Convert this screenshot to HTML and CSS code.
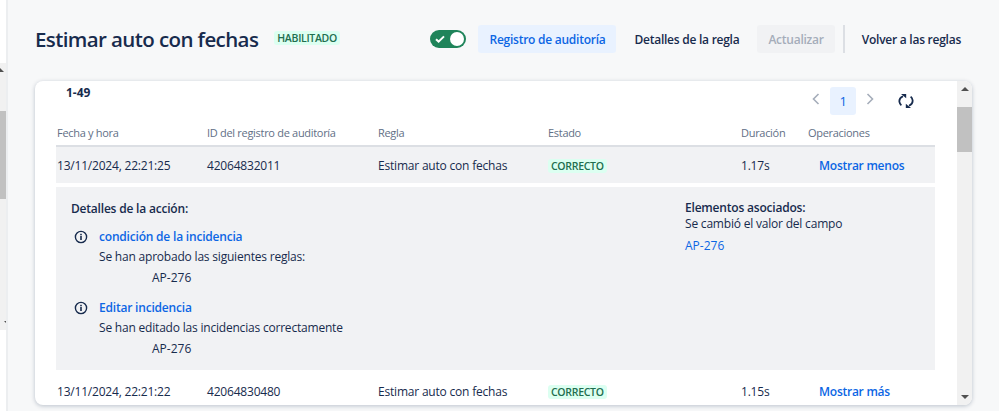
FILE: index.html
```html
<!DOCTYPE html>
<html lang="es">
<head>
    <meta charset="UTF-8">
    <meta name="viewport" content="width=device-width, initial-scale=1.0">
    <title>Estimar auto con fechas</title>
    <link rel="stylesheet" href="styles.css">
</head>
<body>
    <div class="side">
        <div class="side-track">
            <span class="arrow-up side-arrow"></span>
            <div class="side-thumb"></div>
            <span class="arrow-down side-arrow"></span>
        </div>
    </div>
    <main class="main">
        <header class="top">
            <div class="title-wrap">
                <h1>Estimar auto con fechas</h1>
                <span class="lozenge lozenge-top">HABILITADO</span>
            </div>
            <div class="actions">
                <span class="toggle">
                    <svg width="12" height="10" viewBox="0 0 12 10"><path d="M2 5.2l2.6 2.4L10 2.4" fill="none" stroke="#fff" stroke-width="2"/></svg>
                    <span class="knob"></span>
                </span>
                <button type="button" class="btn btn-selected">Registro de auditoría</button>
                <button type="button" class="btn btn-details">Detalles de la regla</button>
                <button type="button" class="btn btn-disabled">Actualizar</button>
                <span class="divider"></span>
                <button type="button" class="btn btn-back">Volver a las reglas</button>
            </div>
        </header>
        <section class="card">
            <div class="card-body">
                <div class="pager-row">
                    <strong class="count">1-49</strong>
                    <div class="pager">
                        <svg class="chev" width="10" height="14" viewBox="0 0 10 14"><path d="M7.5 2L2.5 7l5 5" fill="none" stroke="#a5adba" stroke-width="1.6"/></svg>
                        <span class="page">1</span>
                        <svg class="chev" width="10" height="14" viewBox="0 0 10 14"><path d="M2.5 2l5 5-5 5" fill="none" stroke="#a5adba" stroke-width="1.6"/></svg>
                        <svg class="refresh" width="16" height="16" viewBox="0 0 18 18">
                            <path d="M5.6 3.6C2.6 5 1.2 7.4 1.6 10c.2 1.4.9 2.8 2.2 3.9" fill="none" stroke="#172b4d" stroke-width="2"/>
                            <path d="M3.4 1h5.8v5z" fill="#172b4d"/>
                            <path d="M12.4 14.4c3-1.4 4.4-3.8 4-6.4-.2-1.4-.9-2.8-2.2-3.9" fill="none" stroke="#172b4d" stroke-width="2"/>
                            <path d="M14.6 17H8.8v-5z" fill="#172b4d"/>
                        </svg>
                    </div>
                </div>
                <div class="row row-head">
                    <span>Fecha y hora</span>
                    <span>ID del registro de auditoría</span>
                    <span>Regla</span>
                    <span>Estado</span>
                    <span>Duración</span>
                    <span>Operaciones</span>
                </div>
                <div class="row row-open">
                    <span>13/11/2024, 22:21:25</span>
                    <span>42064832011</span>
                    <span>Estimar auto con fechas</span>
                    <span><span class="lozenge">CORRECTO</span></span>
                    <span>1.17s</span>
                    <a class="more" href="#">Mostrar menos</a>
                </div>
                <div class="detail">
                    <div class="detail-left">
                        <h4>Detalles de la acción:</h4>
                        <div class="action">
                            <svg class="info" width="14" height="14" viewBox="0 0 14 14"><circle cx="7" cy="7" r="5.6" fill="none" stroke="#172b4d" stroke-width="1.4"/><rect x="6.2" y="6" width="1.6" height="4" fill="#172b4d"/><rect x="6.2" y="3.8" width="1.6" height="1.5" fill="#172b4d"/></svg>
                            <div>
                                <a href="#">condición de la incidencia</a>
                                <p>Se han aprobado las siguientes reglas:</p>
                                <p class="key">AP-276</p>
                            </div>
                        </div>
                        <div class="action">
                            <svg class="info" width="14" height="14" viewBox="0 0 14 14"><circle cx="7" cy="7" r="5.6" fill="none" stroke="#172b4d" stroke-width="1.4"/><rect x="6.2" y="6" width="1.6" height="4" fill="#172b4d"/><rect x="6.2" y="3.8" width="1.6" height="1.5" fill="#172b4d"/></svg>
                            <div>
                                <a href="#">Editar incidencia</a>
                                <p>Se han editado las incidencias correctamente</p>
                                <p class="key">AP-276</p>
                            </div>
                        </div>
                    </div>
                    <div class="detail-right">
                        <h4 class="assoc-title">Elementos asociados:</h4>
                        <p class="assoc-text">Se cambió el valor del campo</p>
                        <a class="assoc" href="#">AP-276</a>
                    </div>
                </div>
                <div class="row row-next">
                    <span>13/11/2024, 22:21:22</span>
                    <span>42064830480</span>
                    <span>Estimar auto con fechas</span>
                    <span><span class="lozenge">CORRECTO</span></span>
                    <span>1.15s</span>
                    <a class="more" href="#">Mostrar más</a>
                </div>
            </div>
            <div class="scroll">
                <span class="arrow-up"></span>
                <div class="scroll-thumb"></div>
                <span class="arrow-down"></span>
            </div>
        </section>
    </main>
</body>
</html>
```

FILE: styles.css
```css
* {
    box-sizing: border-box;
}
body {
    margin: 0;
    width: 999px;
    height: 411px;
    overflow: hidden;
    display: flex;
    background-color: #f7f8f9;
    color: #172b4d;
    font-family: "Open Sans", "Noto Sans", sans-serif;
    font-size: 12px;
    letter-spacing: -0.2px;
}
h1, h4, p {
    margin: 0;
}
a {
    color: #0c66e4;
    text-decoration: none;
}
.side {
    width: 8px;
    flex: none;
    background-color: #fff;
    border-right: 2px solid #eceef0;
    padding-top: 63px;
}
.side-track {
    height: 267px;
    background-color: #f1f1f1;
    padding-top: 5px;
    position: relative;
    overflow: hidden;
}
.side-thumb {
    height: 88px;
    margin-top: 43px;
    background-color: #c1c1c1;
}
.side-arrow {
    position: absolute;
    left: -4px;
}
.side-arrow.arrow-down {
    bottom: 5px;
}
.main {
    flex: 1;
    padding: 0 27px;
}
.top {
    height: 81px;
    display: flex;
    align-items: flex-start;
    justify-content: space-between;
    padding-top: 25px;
}
.title-wrap {
    display: flex;
    align-items: center;
    height: 28px;
}
h1 {
    font-size: 20.5px;
    font-weight: 600;
    letter-spacing: -0.6px;
    line-height: 30px;
    margin-right: 16px;
}
.lozenge {
    display: inline-block;
    background-color: #dcfff1;
    color: #216e4e;
    font-size: 10.5px;
    font-weight: 600;
    letter-spacing: -0.3px;
    line-height: 14px;
    padding: 0 3px;
    border-radius: 3px;
}
.lozenge-top {
    margin-top: -3px;
}
.actions {
    display: flex;
    align-items: center;
    height: 28px;
}
.toggle {
    width: 36px;
    height: 18px;
    border-radius: 9px;
    background-color: #1f845a;
    display: flex;
    align-items: center;
    justify-content: space-between;
    padding: 0 2px 0 4px;
    margin-right: 12px;
}
.knob {
    width: 14px;
    height: 14px;
    border-radius: 50%;
    background-color: #fff;
}
.btn {
    height: 28px;
    border: 0;
    border-radius: 3px;
    background: none;
    color: #172b4d;
    font-family: inherit;
    font-size: 12px;
    font-weight: 600;
    letter-spacing: -0.25px;
    padding: 0 11px;
}
.btn-selected {
    background-color: #e9f2ff;
    color: #0c66e4;
    margin-right: 6px;
}
.btn-details {
    padding: 0 12px;
}
.btn-disabled {
    background-color: #f1f2f4;
    color: #a5adba;
    margin-left: 6px;
}
.divider {
    width: 2px;
    height: 28px;
    margin: 0 6px 0 8px;
    background-color: #dcdfe4;
}
.card {
    height: 324px;
    display: flex;
    background-color: #fff;
    border-radius: 8px;
    overflow: hidden;
    box-shadow: 0 1px 4px rgba(9, 30, 66, 0.25);
}
.card-body {
    flex: 1;
    padding: 0 22px 0 21px;
    overflow: hidden;
}
.pager-row {
    height: 43px;
    display: flex;
    justify-content: space-between;
}
.count {
    font-size: 12px;
    font-weight: 700;
    letter-spacing: 0;
    line-height: 20px;
    padding: 2px 0 0 10px;
}
.pager {
    display: flex;
    align-items: flex-start;
    padding-top: 6px;
}
.chev {
    margin-top: 5px;
}
.page {
    width: 26px;
    height: 28px;
    margin: 0 9px;
    border-radius: 3px;
    background-color: #e9f2ff;
    color: #0c66e4;
    font-size: 13px;
    font-weight: 500;
    line-height: 28px;
    text-align: center;
}
.refresh {
    margin: 6px 21px 0 23px;
}
.row {
    display: grid;
    grid-template-columns: 150px 171px 170px 193px 67px 1fr;
    align-items: center;
    padding-left: 1px;
}
.row-head {
    height: 23px;
    padding-bottom: 4px;
    color: #626f86;
    font-size: 11px;
    font-weight: 500;
    letter-spacing: -0.3px;
    border-bottom: 2px solid #dcdfe4;
}
.row-open {
    height: 36px;
    background-color: #f1f2f4;
}
.row-next {
    height: 42px;
}
.more {
    padding-left: 11px;
    font-weight: 600;
    letter-spacing: -0.25px;
}
.detail {
    height: 183px;
    margin-top: 4px;
    background-color: #f1f2f4;
    padding: 13px 15px;
    display: flex;
    line-height: 17px;
}
.detail-left {
    width: 614px;
}
h4 {
    font-size: 12px;
    font-weight: 600;
}
.action {
    display: flex;
    gap: 11px;
    margin-top: 11px;
    padding-left: 3px;
}
.action + .action {
    margin-top: 13px;
}
.action a {
    font-weight: 600;
    letter-spacing: -0.2px;
}
.info {
    flex: none;
    margin-top: 2px;
}
.action p {
    margin-top: 3px;
}
.action .key {
    margin-top: 4px;
    padding-left: 53px;
    letter-spacing: 0;
}
.assoc-title {
    line-height: 15px;
    height: 17px;
}
.assoc-text {
    line-height: 14px;
}
.assoc {
    display: block;
    margin-top: 6px;
    letter-spacing: 0;
}
.scroll {
    width: 15px;
    flex: none;
    background-color: #f1f1f1;
    position: relative;
}
.scroll-thumb {
    height: 45px;
    margin-top: 26px;
    background-color: #c1c1c1;
}
.arrow-up, .arrow-down {
    position: absolute;
    left: 4px;
    width: 0;
    height: 0;
    border-left: 4px solid transparent;
    border-right: 4px solid transparent;
}
.arrow-up {
    top: 6px;
    border-bottom: 4px solid #505050;
}
.arrow-down {
    bottom: 6px;
    border-top: 4px solid #505050;
}
.side-arrow.arrow-up {
    top: 5px;
    left: -4px;
}
```
